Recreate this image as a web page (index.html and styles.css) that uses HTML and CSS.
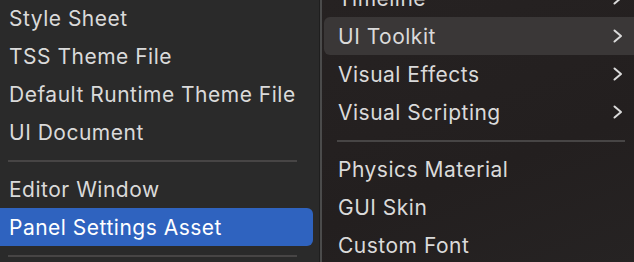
FILE: index.html
```html
<!DOCTYPE html>
<html lang="en">
<head>
    <meta charset="UTF-8">
    <title>Create menu</title>
    <link rel="stylesheet" href="styles.css">
</head>
<body>
    <div class="menus">
        <div class="panel panel-left">
            <div class="menu-list">
                <div class="menu-item">Style Sheet</div>
                <div class="menu-item">TSS Theme File</div>
                <div class="menu-item">Default Runtime Theme File</div>
                <div class="menu-item">UI Document</div>
                <div class="menu-sep"></div>
                <div class="menu-item">Editor Window</div>
                <div class="menu-item selected">Panel Settings Asset</div>
                <div class="menu-sep"></div>
            </div>
        </div>

        <div class="panel panel-right">
            <div class="menu-list">
                <div class="menu-item">Timeline <svg class="chevron" viewBox="0 0 10 14"><polyline points="1.5,1.5 8,7 1.5,12.5"/></svg></div>
                <div class="menu-item hover">UI Toolkit <svg class="chevron" viewBox="0 0 10 14"><polyline points="1.5,1.5 8,7 1.5,12.5"/></svg></div>
                <div class="menu-item">Visual Effects <svg class="chevron" viewBox="0 0 10 14"><polyline points="1.5,1.5 8,7 1.5,12.5"/></svg></div>
                <div class="menu-item">Visual Scripting <svg class="chevron" viewBox="0 0 10 14"><polyline points="1.5,1.5 8,7 1.5,12.5"/></svg></div>
                <div class="menu-sep"></div>
                <div class="menu-item">Physics Material</div>
                <div class="menu-item">GUI Skin</div>
                <div class="menu-item">Custom Font</div>
            </div>
        </div>
    </div>
</body>
</html>
```

FILE: styles.css
```css
body {
    margin: 0;
    padding: 0;
    background-color: #2a2a2a;
    font-family: Inter, "Noto Sans", sans-serif;
    overflow: hidden;
    width: 634px;
    height: 262px;
}

.menus {
    display: flex;
    height: 262px;
}

.panel {
    flex: none;
    overflow: hidden;
}

.panel-left {
    width: 313px;
    padding-right: 6px;
    background-color: #2a2a2a;
    border-right: 1px solid #1e1e1e;
}

.panel-right {
    width: 322px;
    padding-left: 2px;
    background: linear-gradient(160deg, #262222 0%, #231f1f 60%, #262323 100%);
    border-left: 2px solid #4b4b4b;
}

.panel-left .menu-list {
    margin-top: -1px;
    margin-left: -5px;
}

.panel-right .menu-list {
    margin-top: -21px;
}

.menu-item {
    display: flex;
    align-items: center;
    justify-content: space-between;
    height: 38px;
    padding: 0 18px 0 14px;
    border-radius: 6px;
    font-size: 21px;
    letter-spacing: 0.5px;
    color: #dadada;
    white-space: nowrap;
}

.panel-right .menu-item {
    padding-right: 23px;
}

.menu-item.selected {
    background-color: #2f63bf;
    color: #ffffff;
}

.menu-item.hover {
    background-color: #3a3737;
}

.menu-sep {
    height: 19px;
    display: flex;
    align-items: center;
    padding: 0 16px 0 13px;
}

.panel-right .menu-sep {
    padding-right: 21px;
}

.menu-sep::before {
    content: "";
    flex: 1;
    height: 2px;
    background-color: #474545;
}

.chevron {
    width: 10px;
    height: 14px;
    fill: none;
    stroke: #dadada;
    stroke-width: 2;
    stroke-linecap: round;
    stroke-linejoin: round;
}
```
